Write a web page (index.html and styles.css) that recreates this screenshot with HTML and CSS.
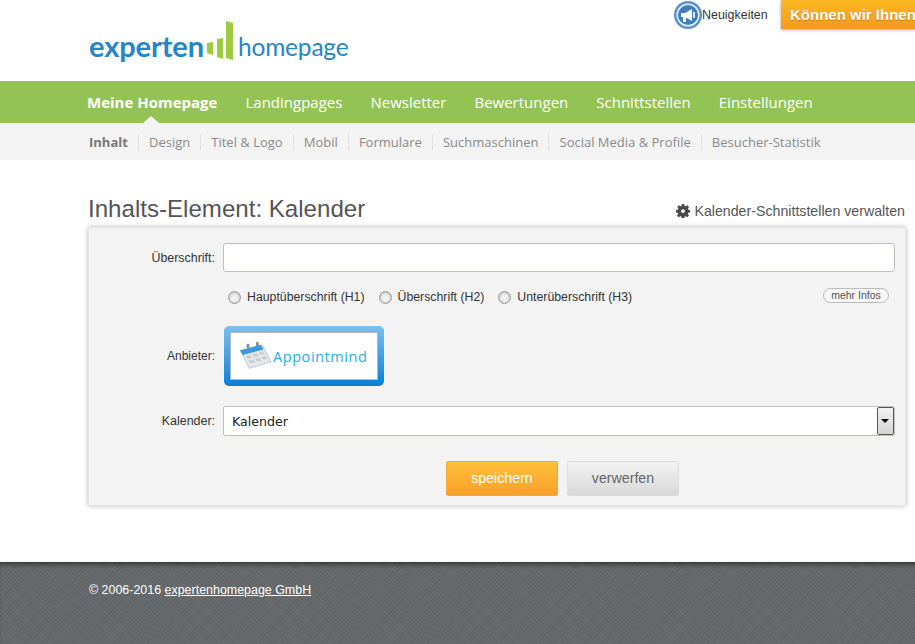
FILE: index.html
```html
<!DOCTYPE html>
<html lang="de">
<head>
<meta charset="utf-8">
<title>Inhalts-Element: Kalender</title>
<link rel="stylesheet" href="styles.css">
</head>
<body>
<header class="top">
  <a class="logo" href="#">
    <span class="logo-a">experten</span>
    <svg class="logo-bars" width="27" height="40" viewBox="0 0 27 40"><polygon points="0,22 6,21 6,34 0,32" fill="#9ccb3f"/><polygon points="10,18 16,17 16,38 10,36" fill="#9ccb3f"/><polygon points="19,0 26,2 26,39 19,37" fill="#9ccb3f"/></svg>
    <span class="logo-b">homepage</span>
  </a>
  <div class="top-right">
    <a class="news" href="#">
      <svg class="news-icon" width="30" height="30" viewBox="0 0 30 30"><circle cx="15" cy="15" r="14" fill="#5b93cb"/><circle cx="15" cy="15" r="11.500" fill="#e8f0f8"/><circle cx="15" cy="15" r="10" fill="#3c7fc0"/><path d="M8 13h4l7-4v12l-7-4H8z" fill="#fff"/><rect x="10" y="17" width="3" height="5" fill="#fff"/><rect x="20" y="12" width="2" height="6" fill="#dfeaf5"/></svg>
      <span>Neuigkeiten</span>
    </a>
    <a class="help" href="#">Können wir Ihnen</a>
  </div>
</header>

<nav class="mainnav">
  <a class="mainnav-item is-active" href="#">Meine Homepage</a>
  <a class="mainnav-item" href="#">Landingpages</a>
  <a class="mainnav-item" href="#">Newsletter</a>
  <a class="mainnav-item" href="#">Bewertungen</a>
  <a class="mainnav-item" href="#">Schnittstellen</a>
  <a class="mainnav-item" href="#">Einstellungen</a>
</nav>

<nav class="subnav">
  <a class="subnav-item is-active" href="#">Inhalt</a>
  <a class="subnav-item" href="#">Design</a>
  <a class="subnav-item" href="#">Titel &amp; Logo</a>
  <a class="subnav-item" href="#">Mobil</a>
  <a class="subnav-item" href="#">Formulare</a>
  <a class="subnav-item" href="#">Suchmaschinen</a>
  <a class="subnav-item" href="#">Social Media &amp; Profile</a>
  <a class="subnav-item" href="#">Besucher-Statistik</a>
</nav>

<main class="content">
  <div class="title-row">
    <h1>Inhalts-Element: Kalender</h1>
    <a class="manage" href="#">
      <svg width="14" height="14" viewBox="0 0 16 16"><path fill="#4a4a4a" fill-rule="evenodd" d="M6.600 0h2.800l.4 2.200 1.200.5L12.900 1.400l2 2-1.300 1.900.5 1.200 2.200.4v2.800l-2.200.4-.5 1.200 1.300 1.900-2 2-1.900-1.300-1.200.5-.4 2.200H6.600l-.4-2.200-1.200-.5-1.900 1.300-2-2 1.300-1.900-.5-1.200L0 9.600V6.800l2.200-.4.500-1.200L1.400 3.400l2-2 1.900 1.300 1-.5zM8 5.900a2.200 2.200 0 1 0 0 4.400 2.200 2.200 0 0 0 0-4.400z"/></svg>
      <span>Kalender-Schnittstellen verwalten</span>
    </a>
  </div>

  <form class="panel">
    <div class="row row-title">
      <label class="row-label" for="ueberschrift">Überschrift:</label>
      <input class="text-input" id="ueberschrift" type="text">
    </div>
    <div class="row-radios">
      <label class="radio"><input type="radio" name="h"><span>Hauptüberschrift (H1)</span></label>
      <label class="radio"><input type="radio" name="h"><span>Überschrift (H2)</span></label>
      <label class="radio"><input type="radio" name="h"><span>Unterüberschrift (H3)</span></label>
      <a class="more" href="#">mehr Infos</a>
    </div>
    <div class="row row-provider">
      <span class="row-label row-label-tight">Anbieter:</span>
      <div class="provider">
        <div class="provider-inner">
          <svg width="34" height="30" viewBox="0 0 36 30"><polygon points="2,10 25,4 34,21 11,28" fill="#e6e8ea" stroke="#b5b8bb" stroke-width=".8"/><polygon points="1,9 23,3 26,8 4,14" fill="#3a9bdc"/><g fill="#c9cdd0"><polygon points="7,15 12,14 14,17 9,18"/><polygon points="14,13 19,12 21,15 16,16"/><polygon points="21,11 25,10 27,13 23,14"/><polygon points="10,20 15,19 17,22 12,23"/><polygon points="17,18 22,17 24,20 19,21"/><polygon points="24,16 28,15 30,18 26,19"/></g><rect x="8" y="2" width="3" height="5" rx="1.500" fill="#8b9094"/><rect x="18" y="0" width="3" height="5" rx="1.500" fill="#8b9094"/></svg>
          <span class="provider-name">Appointmind</span>
        </div>
      </div>
    </div>
    <div class="row row-select">
      <label class="row-label" for="kalender">Kalender:</label>
      <div class="select" id="kalender">
        <span class="select-value">Kalender</span>
        <span class="select-arrow"></span>
      </div>
    </div>
    <div class="actions">
      <button class="btn btn-save" type="button">speichern</button>
      <button class="btn btn-discard" type="button">verwerfen</button>
    </div>
  </form>
</main>

<footer class="footer">
  <span>© 2006-2016 <a href="#">expertenhomepage GmbH</a></span>
</footer>
</body>
</html>
```
FILE: styles.css
```css
* { box-sizing: border-box; }
html, body { margin: 0; padding: 0; }
body {
  width: 915px;
  height: 644px;
  overflow: hidden;
  background: #fff;
  font-family: "Liberation Sans", Arial, sans-serif;
  font-size: 12.450px;
  color: #333;
}
a { text-decoration: none; color: inherit; }

.top {
  height: 81px;
  display: flex;
  justify-content: space-between;
  align-items: flex-start;
  padding-left: 89px;
}
.logo {
  display: flex;
  align-items: flex-start;
  margin-top: 21px;
  height: 42px;
  color: #2586c6;
  font-family: "Lato", sans-serif;
  white-space: nowrap;
}
.logo-a { font-size: 29px; font-weight: 700; line-height: 30px; margin-top: 10px; width: 118px; letter-spacing: -.1px; }
.logo-bars { flex: none; }
.logo-b { font-size: 24.500px; font-weight: 400; line-height: 30px; margin-top: 11px; margin-left: 4px; letter-spacing: -.2px; }

.top-right { display: flex; align-items: flex-start; flex: none; width: 242px; }
.news { display: flex; align-items: center; height: 29px; width: 108px; flex: none; color: #333; }
.news-icon { flex: none; margin-right: -1px; }
.help {
  flex: none;
  height: 29px;
  width: 134px;
  padding: 0 0 0 9px;
  background: linear-gradient(#fdb921, #f7981d);
  color: #fff;
  font-size: 15px;
  font-weight: 700;
  line-height: 29px;
  white-space: nowrap;
  box-shadow: 0 1px 3px rgba(0,0,0,.35);
  text-shadow: 0 1px 1px rgba(0,0,0,.25);
}

.mainnav {
  height: 42px;
  background: #94c355;
  display: flex;
  align-items: center;
  gap: 28.050px;
  padding-left: 87px;
  font-family: "Open Sans", sans-serif;
  font-size: 15px;
  color: #fff;
}
.mainnav-item { position: relative; line-height: 42px; white-space: nowrap; }
.mainnav-item.is-active { font-weight: 700; }
.mainnav-item.is-active::after {
  content: "";
  position: absolute;
  left: 56px;
  bottom: 0;
  border: 8px solid transparent;
  border-top: 0;
  border-bottom-color: #f3f3f3;
  border-bottom-width: 7px;
}

.subnav {
  height: 37px;
  background: #f3f3f3;
  display: flex;
  align-items: center;
  padding-left: 89px;
  font-family: "Open Sans", sans-serif;
  font-size: 13px;
  color: #8a8a8a;
}
.subnav-item { line-height: 16px; padding-right: 10.050px; margin-right: 10.050px; border-right: 1px solid #e0e0e0; white-space: nowrap; }
.subnav-item:last-child { border-right: 0; }
.subnav-item.is-active { font-weight: 700; color: #777; }

.content { width: 816px; margin-left: 89px; padding-top: 34px; height: 402px; }
.title-row { display: flex; justify-content: space-between; align-items: flex-end; height: 34px; }
h1 {
  margin: 0 0 4px -1px;
  font-size: 24.100px;
  font-weight: 400;
  line-height: 30px;
  color: #555;
}
.manage { display: flex; align-items: center; gap: 4px; font-size: 14.200px; line-height: 18px; color: #555; margin-bottom: 8px; }

.panel {
  height: 279px;
  margin: -1px -1px 0;
  background: #f3f3f3;
  border: 1px solid #e6e6e6;
  box-shadow: 0 0 5px rgba(0,0,0,.28);
  padding: 15px 10px 0 1px;
}
.row { display: flex; align-items: center; }
.row-label { width: 125px; text-align: right; color: #333; flex: none; }
.row-label-tight { font-size: 12px; }
.text-input {
  flex: 1;
  margin-left: 8px;
  height: 29px;
  background: #fff;
  border: 1px solid #c2c2b4;
  border-radius: 3px;
  padding: 0 8px;
}
.row-radios { display: flex; align-items: center; height: 16px; margin-top: 17px; padding-left: 138px; }
.radio { display: flex; align-items: center; margin-right: 14px; color: #333; font-size: 12.300px; }
.radio input {
  appearance: none;
  margin: 0 6px 0 0;
  width: 13px;
  height: 13px;
  flex: none;
  border-radius: 50%;
  border: 1px solid #9a9a9a;
  background: radial-gradient(circle at 50% 55%, #f2f2f2 0 30%, #c9c9c9 75%, #b5b5b5 100%);
}
.more {
  margin-left: auto;
  margin-right: 6px;
  margin-bottom: 4px;
  height: 15px;
  width: 66px;
  text-align: center;
  border: 1px solid #bbb;
  border-radius: 8px;
  font-size: 10.500px;
  line-height: 13px;
  color: #555;
  background: #f6f6f6;
}
.row-provider { margin-top: 21px; }
.provider {
  margin-left: 9px;
  width: 160px;
  height: 60px;
  padding: 6px;
  border-radius: 5px;
  background: linear-gradient(#7dc0f0, #0a7fd4);
}
.provider-inner {
  height: 100%;
  background: #fff;
  border: 1px solid #b5b5b5;
  display: flex;
  align-items: center;
  padding-left: 8px;
}
.provider-name { font-family: "Open Sans", sans-serif; font-size: 14.500px; font-weight: 400; color: #29aee6; letter-spacing: .57px; }
.row-select { margin-top: 20px; }
.select {
  flex: 1;
  margin-left: 8px;
  height: 30px;
  background: #fff;
  border: 1px solid #c0c0b4;
  border-radius: 2px;
  display: flex;
  justify-content: space-between;
  align-items: center;
  padding: 0 0 0 8px;
  font-family: "DejaVu Sans", sans-serif;
  font-size: 12.600px;
  color: #222;
}
.select-arrow {
  position: relative;
  width: 17px;
  height: 28px;
  background: linear-gradient(#f2f2f2, #d4d4d4);
  border: 1px solid #555;
  border-radius: 2px;
  flex: none;
}
.select-arrow::after {
  content: "";
  position: absolute;
  left: 3px;
  top: 11px;
  border: 4px solid transparent;
  border-bottom: 0;
  border-top-color: #000;
}
.actions { display: flex; gap: 9px; margin-top: 25px; padding-left: 356px; }
.btn {
  width: 112px;
  height: 35px;
  border-radius: 2px;
  font-family: "Liberation Sans", Arial, sans-serif;
  font-size: 14.200px;
  padding: 0 0 2px;
}
.btn-save { background: linear-gradient(#ffc03a, #f9a02a); border: 1px solid #f2a93a; color: #fff; }
.btn-discard { background: linear-gradient(#f3f3f3, #d8d8d8); border: 1px solid #ddd; color: #666; }

.footer {
  height: 82px;
  background-color: #65696b;
  background-image:
    repeating-linear-gradient(45deg, rgba(255,255,255,.035) 0 1px, transparent 1px 3px),
    repeating-linear-gradient(-45deg, rgba(0,0,0,.05) 0 1px, transparent 1px 3px);
  box-shadow: inset 0 5px 5px -3px rgba(0,0,0,.55);
  padding: 21px 0 0 89px;
  line-height: 15px;
  color: #fff;
}
.footer a { text-decoration: underline; }
```
